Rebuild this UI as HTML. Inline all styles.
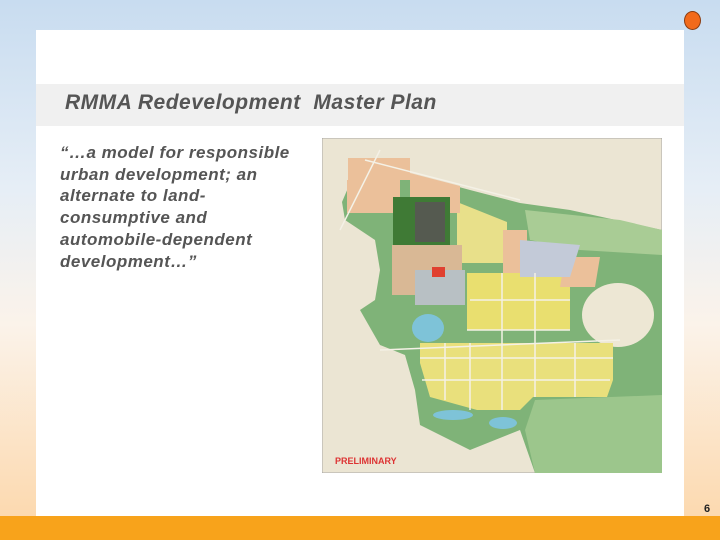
<!DOCTYPE html>
<html><head><style>
html,body{margin:0;padding:0;}
body{width:720px;height:540px;position:relative;overflow:hidden;background:linear-gradient(#c8dcf0 0%,#e6eef6 35%,#fbf3ea 60%,#fcd6a8 100%);font-family:"Liberation Sans",sans-serif;}
#panel{position:absolute;left:36px;top:30px;width:648px;height:486px;background:#fff;}
#band{position:absolute;left:36px;top:84px;width:648px;height:42px;background:#f0f0f0;}
#title{position:absolute;left:65px;top:91px;font-size:21px;font-weight:bold;font-style:italic;color:#555;letter-spacing:0.5px;white-space:pre;}
#quote{position:absolute;left:60px;top:142px;font-size:17px;line-height:21.7px;font-weight:bold;font-style:italic;color:#555;white-space:nowrap;letter-spacing:0.5px;}
#bar{position:absolute;left:0;top:516px;width:720px;height:24px;background:#f8a31b;}
#dot{position:absolute;left:684px;top:11px;width:17px;height:19px;border-radius:50%;background:#f26a1b;border:1px solid #8a3b10;box-sizing:border-box;}
#num{position:absolute;left:704px;top:503px;font-size:11px;font-weight:bold;color:#222;}
svg{position:absolute;left:322px;top:138px;}
</style></head><body>
<div id="panel"></div><div id="band"></div>
<div id="title">RMMA Redevelopment  Master Plan</div>
<div id="quote">“…a model for responsible<br>urban development; an<br>alternate to land-<br>consumptive and<br>automobile-dependent<br>development…”</div>
<svg width="340" height="335" viewBox="2 8 340 335">
<rect x="2" y="8" width="340" height="335" fill="#ebe5d3" stroke="#999" stroke-width="0.8"/>
<polygon points="22,72 40,30 150,60 200,73 250,80 342,100 342,343 215,343 200,300 150,320 120,305 100,295 95,260 85,225 60,215 40,180 55,170 60,140 55,110 25,90" fill="#7fb378"/>
<polygon points="205,80 300,90 342,100 342,125 260,120 210,110" fill="#a9cc95"/>
<polygon points="215,270 342,265 342,343 215,343 205,300" fill="#9cc68c"/>
<ellipse cx="298" cy="185" rx="36" ry="32" fill="#ede7d4"/>
<polygon points="100,213 293,213 293,250 287,267 213,267 200,280 157,280 110,267 100,233" fill="#e9e07c"/>
<rect x="147" y="143" width="103" height="57" fill="#e9df6f"/>
<polygon points="137,72 187,92 187,133 137,133" fill="#e8e08a"/>
<rect x="28" y="28" width="62" height="22" fill="#ebc09a"/>
<rect x="27" y="50" width="53" height="33" fill="#ebc09a"/>
<polygon points="90,43 140,56 140,83 90,83" fill="#ebc09a"/>
<polygon points="183,100 207,100 207,143 183,143" fill="#ebc09a"/>
<polygon points="245,127 280,127 275,157 240,157" fill="#ebc09a"/>
<polygon points="200,110 260,115 250,147 200,147" fill="#c3cad8"/>
<rect x="73" y="67" width="57" height="56" fill="#3f7a35"/>
<rect x="95" y="72" width="30" height="40" fill="#555a50"/>
<rect x="72" y="115" width="70" height="50" fill="#d9b895"/>
<rect x="95" y="140" width="50" height="35" fill="#b8c0c4"/>
<rect x="112" y="137" width="13" height="10" fill="#e04030"/>
<ellipse cx="108" cy="198" rx="16" ry="14" fill="#7ec3d8"/>
<ellipse cx="133" cy="285" rx="20" ry="5" fill="#7ec3d8"/>
<ellipse cx="183" cy="293" rx="14" ry="6" fill="#7ec3d8"/>
<g stroke="#f4f1e6" stroke-width="1.5" fill="none">
<line x1="100" y1="228" x2="293" y2="228"/><line x1="102" y1="250" x2="290" y2="250"/>
<line x1="150" y1="170" x2="250" y2="170"/><line x1="147" y1="200" x2="250" y2="200"/>
<line x1="182" y1="143" x2="182" y2="280"/><line x1="215" y1="143" x2="215" y2="267"/>
<line x1="150" y1="213" x2="150" y2="280"/><line x1="125" y1="213" x2="125" y2="270"/><line x1="255" y1="213" x2="255" y2="267"/>
<line x1="20" y1="100" x2="60" y2="20"/><line x1="45" y1="30" x2="200" y2="70"/><line x1="60" y1="220" x2="300" y2="210"/>
</g>
<text x="15" y="334" font-size="9" font-weight="bold" fill="#d33" font-family="Liberation Sans">PRELIMINARY</text>
</svg>
<div id="dot"></div>
<div id="num">6</div>
<div id="bar"></div>
</body></html>
